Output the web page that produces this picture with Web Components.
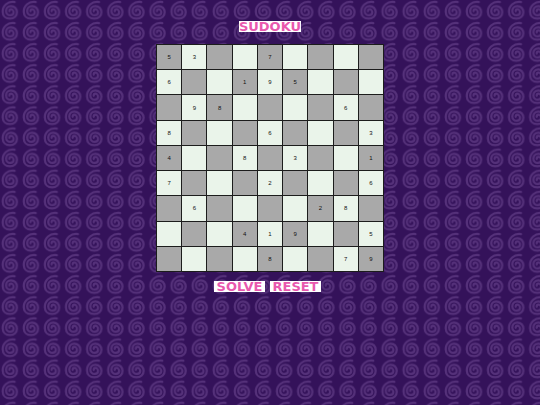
<!DOCTYPE html>
<html lang="en">
<head>
<meta charset="utf-8">
<title>Sudoku</title>
<style>
body{
  margin: 0;
  background: #34125a;
  font-family: "Liberation Sans", Arial, sans-serif;
}
</style>
</head>
<body>
<swirl-page>
  <pixel-title>SUDOKU</pixel-title>
  <sudoku-board></sudoku-board>
  <game-controls>
    <game-button action="solve">SOLVE</game-button>
    <game-button action="reset">RESET</game-button>
  </game-controls>
</swirl-page>
<script>
const PUZZLE = [
  "53..7....",
  "6..195...",
  ".98....6.",
  "8...6...3",
  "4..8.3..1",
  "7...2...6",
  ".6....28.",
  "...419..5",
  "....8..79",
]

const define = (name, html, base = HTMLElement) => {
  customElements.define(name, class extends base {
    constructor(){
      super()
      this.attachShadow({mode: "open"}).innerHTML = html
      if(this.setup){
        this.setup()
      }
    }
  })
}

define("swirl-page", `
<style>
:host{
  display: grid;
  min-height: 100vh;
}
svg, main{
  grid-area: 1 / 1;
}
svg{
  display: block;
  width: 100%;
  height: 100%;
}
main{
  display: flex;
  flex-direction: column;
  align-items: center;
  padding: 21px 0;
}
</style>
<svg aria-hidden="true">
  <defs>
    <pattern id="swirl" width="63.3" height="63.3" patternUnits="userSpaceOnUse" patternTransform="scale(.3333)">
      <path d="M44 6C22 3 8 18 8 35C8 48 17 56 30 56C43 56 51 47 51 37C51 26 43 18 33 18C24 18 18 25 18 33C18 41 24 46 31 46C37 46 41 42 41 37C41 32 37 28 33 28C30 28 28 31 28 34"
        fill="none" stroke="#55317a" stroke-width="6.5" stroke-linecap="round"/>
    </pattern>
  </defs>
  <rect width="100%" height="100%" fill="url(#swirl)"/>
</svg>
<main><slot></slot></main>
`)

define("pixel-title", `
<style>
:host{
  display: block;
}
h1{
  margin: 0;
  background: #fff;
  color: #e958ae;
  font: bold 13px/11px "DejaVu Sans", sans-serif;
}
</style>
<h1><slot></slot></h1>
`)

class Board extends HTMLElement {
  setup(){
    this.table = this.shadowRoot.querySelector("table")
    PUZZLE.forEach((line, r) => {
      const row = this.table.insertRow();
      [...line].forEach((digit, c) => {
        const cell = row.insertCell()
        if(digit !== "."){
          cell.textContent = digit
          return
        }
        const input = document.createElement("input")
        input.maxLength = 1
        input.inputMode = "numeric"
        input.setAttribute("aria-label", `Row ${r + 1}, column ${c + 1}`)
        input.addEventListener("input", () => {
          input.value = input.value.replace(/[^1-9]/g, "")
        })
        cell.append(input)
      })
    })
  }
  get cells(){
    return [...this.table.querySelectorAll("td")]
  }
  reset(){
    this.table.querySelectorAll("input").forEach(i => i.value = "")
  }
  solve(){
    const grid = PUZZLE.join("").split("")
    const fits = (i, d) => grid.every((v, j) => {
      const sameRow = (i / 9 | 0) === (j / 9 | 0)
      const sameCol = i % 9 === j % 9
      const sameBox = (i / 27 | 0) === (j / 27 | 0) && (i % 9 / 3 | 0) === (j % 9 / 3 | 0)
      return v !== d || !(sameRow || sameCol || sameBox)
    })
    const fill = () => {
      const i = grid.indexOf(".")
      if(i < 0) return true
      for(const d of "123456789"){
        if(!fits(i, d)) continue
        grid[i] = d
        if(fill()) return true
        grid[i] = "."
      }
      return false
    }
    fill()
    this.cells.forEach((cell, i) => {
      const input = cell.querySelector("input")
      if(input) input.value = grid[i]
    })
  }
}

define("sudoku-board", `
<style>
:host{
  display: block;
  width: 228px;
  margin: 12px 0 9px;
}
table{
  width: 100%;
  height: 228px;
  table-layout: fixed;
  border-collapse: collapse;
}
td{
  box-sizing: border-box;
  padding: 0;
  border: 1px solid #1c1c1c;
  background: #eaf4ea;
  color: #111;
  font-size: 6px;
  line-height: 8px;
  text-align: center;
}
tr:nth-child(odd) td:nth-child(odd),
tr:nth-child(even) td:nth-child(even){
  background: #a9a9a9;
}
input{
  display: block;
  box-sizing: border-box;
  width: 100%;
  height: 24px;
  padding: 0;
  border: 0;
  background: none;
  color: inherit;
  font: inherit;
  text-align: center;
}
</style>
<table aria-label="Sudoku board"></table>
`, Board)

define("game-controls", `
<style>
:host{
  display: flex;
}
</style>
<slot></slot>
`)

class GameButton extends HTMLElement {
  setup(){
    this.shadowRoot.querySelector("button").addEventListener("click", () => {
      document.querySelector("sudoku-board")[this.getAttribute("action")]()
    })
  }
}

define("game-button", `
<style>
:host{
  display: block;
  margin-right: 5px;
}
button{
  display: block;
  min-width: 51px;
  padding: 0;
  border: 0;
  background: #fff;
  color: #e958ae;
  font: bold 13px/11px "DejaVu Sans", sans-serif;
  text-align: center;
  cursor: pointer;
}
</style>
<button type="button"><slot></slot></button>
`, GameButton)
</script>
</body>
</html>
